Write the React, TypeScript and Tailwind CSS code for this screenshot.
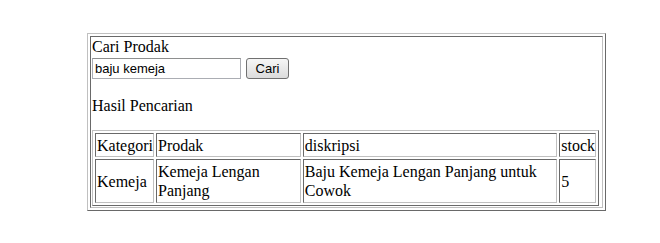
export default function App() {
  const cell =
    "border border-t-[#696969] border-l-[#696969] border-b-[#c0c0c0] border-r-[#c0c0c0] pl-px pr-0";

  return (
    <div className="min-h-[243px] w-[660px] bg-white pt-[33px] pl-[87px] font-['Liberation_Serif',serif] text-[16px] text-black">
      <table className="w-[519px] border-separate border-spacing-[2px] border border-t-[#c0c0c0] border-l-[#c0c0c0] border-b-[#696969] border-r-[#696969]">
        <tbody>
          <tr>
            <td className={cell + " py-px align-top"}>
              <div className="leading-[18px]">Cari Prodak</div>
              <div className="mt-[2px] flex items-center gap-[5px]">
                <input
                  defaultValue="baju kemeja"
                  className="h-[21px] w-[149px] border border-[#abadb3] border-t-[#8e8f8f] px-[2px] font-['Liberation_Sans',sans-serif] text-[13px] text-black outline-none"
                />
                <button className="h-[21px] w-[43px] rounded-[3px] border border-[#707070] bg-gradient-to-b from-[#f6f6f6] to-[#dcdcdc] font-['Liberation_Sans',sans-serif] text-[13px] leading-none text-black">
                  Cari
                </button>
              </div>
              <div className="mt-[18px] leading-[18px]">Hasil Pencarian</div>
              <table className="mt-[15px] w-[507px] border-separate border-spacing-[2px] border border-t-[#c0c0c0] border-l-[#c0c0c0] border-b-[#696969] border-r-[#696969] leading-[19px]">
                <tbody>
                  <tr>
                    <td className={cell + " pt-[2px] pb-[1px]"}>Kategori</td>
                    <td className={cell + " w-[146px] pt-[2px] pb-[1px]"}>Prodak</td>
                    <td className={cell + " w-[257px] pt-[2px] pb-[1px]"}>diskripsi</td>
                    <td className={cell + " pt-[2px] pb-[1px]"}>stock</td>
                  </tr>
                  <tr>
                    <td className={cell + " py-[2px] align-middle"}>Kemeja</td>
                    <td className={cell + " py-[2px] align-middle"}>
                      Kemeja Lengan Panjang
                    </td>
                    <td className={cell + " py-[2px] align-middle"}>
                      Baju Kemeja Lengan Panjang untuk Cowok
                    </td>
                    <td className={cell + " py-[2px] align-middle"}>5</td>
                  </tr>
                </tbody>
              </table>
            </td>
          </tr>
        </tbody>
      </table>
    </div>
  );
}
